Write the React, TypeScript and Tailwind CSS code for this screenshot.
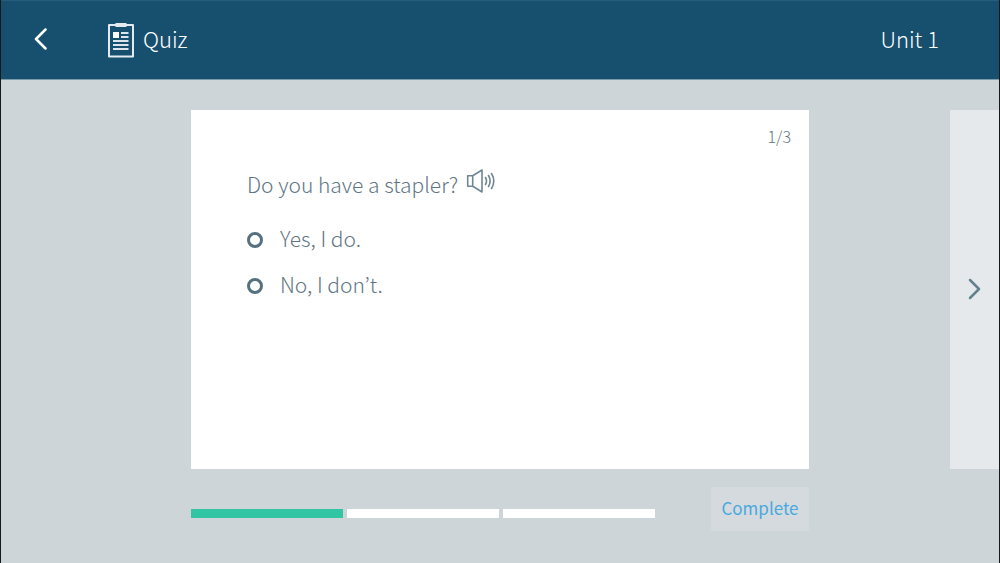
import { useState } from "react";

const answers = ["Yes, I do.", "No, I don’t."];
const steps = [1, 2, 3];

function ClipboardIcon() {
  return (
    <svg width="28" height="36" viewBox="0 0 28 36" fill="none" aria-hidden="true">
      <path d="M2 3h24v31.500h-24z" stroke="#e3ebf0" strokeWidth="2" strokeLinejoin="round" />
      <path d="M8.500 1h11v4h-11z" fill="#e3ebf0" />
      <path d="M6 10h6v6h-6z" fill="#ffffff" />
      <path d="M14 11h7.500M14 15h7.500M6 19h15.500M6 23h15.500M6 27h15.500" stroke="#dbe5eb" strokeWidth="2" />
    </svg>
  );
}

function SpeakerIcon() {
  return (
    <svg width="30" height="26" viewBox="0 0 30 26" fill="none" stroke="#6f8795" strokeWidth="1.600" aria-hidden="true">
      <path d="M1.700 7.700h5v10.600h-5zM6.700 7.700L16 2v22l-9.300-5.700" strokeLinejoin="round" />
      <path d="M19.500 9.500q2 3.500 0 7M22.500 7.500q3.200 5.500 0 11M25.500 5.500q4.600 7.500 0 15" strokeLinecap="round" />
    </svg>
  );
}

export default function App() {
  const [selected, setSelected] = useState<string | null>(null);

  return (
    <div className="flex min-h-screen flex-col border-x border-[#16191c] bg-[#ced5d8] font-['Noto_Sans_CJK_KR','Noto_Sans_CJK_SC',sans-serif] font-light text-[#5f7684]">
      <header className="flex h-20 items-center border-t border-b border-t-[#285d79] border-b-[#7b9bab] bg-[#17506f] pr-15 pl-8 text-white">
        <button type="button" aria-label="Back" className="mr-15 flex pb-0.5">
          <svg width="14" height="22" viewBox="0 0 14 22" fill="none" stroke="currentColor" strokeWidth="2.500" strokeLinecap="round" strokeLinejoin="round" aria-hidden="true">
            <path d="M12.500 1.500L3 11l9.500 9.500" />
          </svg>
        </button>
        <ClipboardIcon />
        <h1 className="ml-2 pb-1 text-[22px] leading-8">Quiz</h1>
        <p className="ml-auto pb-1 text-[22px] leading-8">Unit 1</p>
      </header>

      <main className="grid flex-1 grid-cols-[190px_minmax(0,1fr)_190px] grid-rows-[1fr_auto] gap-y-[18px] pt-[30px] pb-8">
        <section className="col-start-2 bg-white px-14 pt-2.5">
          <p className="-mr-10 pr-0.5 text-right text-base leading-8">1/3</p>
          <fieldset className="mt-4">
            <legend className="flex items-center text-[21px] leading-8">
              Do you have a stapler?
              <button type="button" aria-label="Play the question" className="ml-2 flex pb-1.5">
                <SpeakerIcon />
              </button>
            </legend>
            <div className="mt-5.5 flex flex-col items-start gap-3.5">
              {answers.map((answer) => (
                <label key={answer} className="flex items-center gap-[17px] text-[21px] leading-8">
                  <input
                    type="radio"
                    name="answer"
                    checked={selected === answer}
                    onChange={() => setSelected(answer)}
                    className="mt-1 size-4 appearance-none rounded-full border-3 border-[#55707f] checked:bg-[#32c5a4]"
                  />
                  {answer}
                </label>
              ))}
            </div>
          </fieldset>
        </section>

        <button type="button" aria-label="Next question" className="col-start-3 flex w-[49px] items-center justify-center justify-self-end bg-[#e5e9ec] pb-0.5">
          <svg width="14" height="22" viewBox="0 0 14 22" fill="none" stroke="#64808f" strokeWidth="2.500" strokeLinecap="round" strokeLinejoin="round" aria-hidden="true">
            <path d="M2 2l9 9-9 9" />
          </svg>
        </button>

        <div className="col-start-2 row-start-2 flex items-center gap-14">
          <div className="mt-2 flex flex-1 gap-1" role="progressbar" aria-label="Quiz progress" aria-valuemin={0} aria-valuemax={3} aria-valuenow={1}>
            {steps.map((step) => (
              <span key={step} className={step === 1 ? "h-[9px] flex-1 bg-[#32c5a4]" : "h-[9px] flex-1 bg-white"} />
            ))}
          </div>
          <button type="button" className="h-11 w-[98px] rounded-xs bg-[#d4dade] pb-0.5 text-[17px] font-normal text-[#49a9de]">
            Complete
          </button>
        </div>
      </main>
    </div>
  );
}
